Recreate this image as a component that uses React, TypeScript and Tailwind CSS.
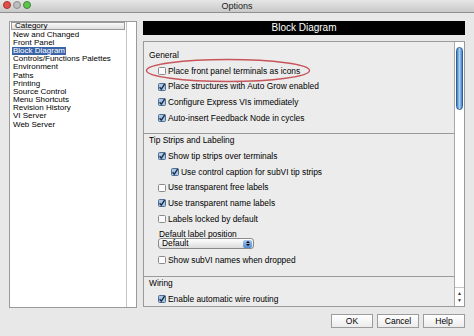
import type { ReactNode } from 'react';

const categories = [
  'New and Changed',
  'Front Panel',
  'Block Diagram',
  'Controls/Functions Palettes',
  'Environment',
  'Paths',
  'Printing',
  'Source Control',
  'Menu Shortcuts',
  'Revision History',
  'VI Server',
  'Web Server',
];

const Check = ({ on }: { on: boolean }) => (
  <svg width="8" height="8" viewBox="0 0 8 8" className="shrink-0">
    <rect x="0.5" y="0.5" width="7" height="7" rx="1" fill={on ? '#a9c6e4' : '#fafafa'} stroke={on ? '#4d6f93' : '#8a8a8a'} />
    {on && <path d="M1.6 4.2 L3.3 6.2 L6.8 0.8" fill="none" stroke="#1c2c48" strokeWidth="1.4" />}
  </svg>
);

const Row = ({ on, label, indent }: { on: boolean; label: string; indent?: boolean }) => (
  <div className={`flex items-center h-[15.8px] gap-[2px] ${indent ? 'pl-[27px]' : 'pl-[14px]'}`}>
    <Check on={on} />
    <span>{label}</span>
  </div>
);

const Section = ({ title, children, top, bottom }: { title: string; children: ReactNode; top?: string; bottom?: string }) => (
  <div className={`${bottom ?? ''} ${top ?? ''}`}>
    <div className="h-[12px] flex items-center pl-[5px]">{title}</div>
    <div className="pt-[2px]">{children}</div>
  </div>
);

const Btn = ({ label }: { label: string }) => (
  <div className="w-[42px] h-[14px] flex items-center justify-center border border-[#9c9c9c] bg-gradient-to-b from-[#ffffff] to-[#ececec] text-[8.5px]">
    {label}
  </div>
);

export default function App() {
  return (
    <div
      className="w-[474px] h-[336px] bg-[#e8e8e8] text-black text-[8px] leading-none overflow-hidden relative"
      style={{ fontFamily: '"Liberation Sans", Arial, sans-serif' }}
    >
      {/* title bar */}
      <div className="h-[13px] flex items-center bg-gradient-to-b from-[#e6e6e6] to-[#c9c9c9] border-b border-[#8f8f8f]">
        <div className="relative z-50 w-[60px] shrink-0 h-full flex items-start pt-[1px] pl-[3px] gap-[2px]">
          <span className="block shrink-0 w-[8px] h-[8px] rounded-full bg-[#e0504a] border border-[#a8312c]"></span>
          <span className="block shrink-0 w-[8px] h-[8px] rounded-full bg-[#bdbdbd] border border-[#8c8c8c]"></span>
          <span className="block shrink-0 w-[8px] h-[8px] rounded-full bg-[#5fc24f] border border-[#3a8a2f]"></span>
        </div>
        <span className="flex-1 text-[9px] text-[#222] text-center">Options</span>
        <div className="w-[60px] shrink-0" />
      </div>

      <div className="flex gap-[6px] pl-[9px] pt-[8px]">
        {/* category list */}
        <div className="w-[128px] h-[287px] bg-white border border-[#9a9a9a] flex">
          <div className="flex-1">
            <div className="h-[8px] mx-[1px] border border-[#9a9a9a] bg-gradient-to-b from-[#fafafa] to-[#dedede] flex items-center pl-[3px]">
              Category
            </div>
            <div className="pt-[0.5px]">
              {categories.map((c) => (
                <div key={c} className="h-[8.2px] flex items-center pl-[3px]">
                  <span className={c === 'Block Diagram' ? 'bg-[#3a64a8] text-white px-[1px] -ml-[1px]' : ''}>{c}</span>
                </div>
              ))}
            </div>
          </div>
          <div className="w-[10px] border-l border-[#c4c4c4] bg-white" />
        </div>

        {/* right side */}
        <div className="w-[322px] flex flex-col">
          <div className="h-[14px] bg-black text-white text-[10px] flex items-center justify-center">Block Diagram</div>
          <div className="mt-[6px] h-[266px] border border-[#9a9a9a] bg-[#ececec] flex relative text-[8.4px]">
            <div className="flex-1">
              <Section title="General" top="pt-[7px]" bottom="pb-[7px] border-b border-[#9a9a9a]">
                <Row on={false} label="Place front panel terminals as icons" />
                <Row on label="Place structures with Auto Grow enabled" />
                <Row on label="Configure Express VIs immediately" />
                <Row on label="Auto-insert Feedback Node in cycles" />
              </Section>
              <Section title="Tip Strips and Labeling" bottom="pb-[8px] border-b border-[#9a9a9a]">
                <Row on label="Show tip strips over terminals" />
                <Row on indent label="Use control caption for subVI tip strips" />
                <Row on={false} label="Use transparent free labels" />
                <Row on label="Use transparent name labels" />
                <Row on={false} label="Labels locked by default" />
                <div className="pl-[15px] pt-[3px] h-[11px]">Default label position</div>
                <div className="ml-[14px] w-[96px] h-[11px] rounded-[3px] border border-[#8a8a8a] bg-gradient-to-b from-[#ffffff] to-[#dcdcdc] flex items-center justify-between pl-[3px] pr-[1px]">
                  <span>Default</span>
                  <div className="w-[9px] h-[8px] rounded-[2px] bg-gradient-to-b from-[#a6c8ec] to-[#4f8ad0] flex flex-col items-center justify-center gap-[1px]">
                    <div className="w-0 h-0 border-l-[2px] border-r-[2px] border-b-[2px] border-l-transparent border-r-transparent border-b-black" />
                    <div className="w-0 h-0 border-l-[2px] border-r-[2px] border-t-[2px] border-l-transparent border-r-transparent border-t-black" />
                  </div>
                </div>
                <div className="pt-[3px]">
                  <Row on={false} label="Show subVI names when dropped" />
                </div>
              </Section>
              <Section title="Wiring">
                <Row on label="Enable automatic wire routing" />
              </Section>
            </div>

            {/* scrollbar */}
            <div className="w-[10px] border-l border-[#a8a8a8] bg-white flex flex-col items-center pt-[5px]">
              <div className="w-[7px] h-[63px] rounded-full bg-gradient-to-r from-[#3f7fc4] via-[#a9d2f5] to-[#3f7fc4] border border-[#2f5f96]" />
              <div className="flex-1" />
              <div className="w-full border-t border-[#c8c8c8] flex flex-col items-center gap-[2px] py-[3px] text-[5px] text-[#333]">
                <span>▲</span>
                <span>▼</span>
              </div>
            </div>

            {/* red annotation ellipse */}
            <svg className="absolute left-[1px] top-[16px]" width="170" height="26" viewBox="0 0 170 26">
              <ellipse cx="83" cy="12.5" rx="81.5" ry="11" fill="none" stroke="#c8555a" strokeWidth="1.4" />
            </svg>
          </div>
        </div>
      </div>

      {/* buttons */}
      <div className="flex justify-end gap-[4px] pr-[9px] pt-[6px]">
        <Btn label="OK" />
        <Btn label="Cancel" />
        <Btn label="Help" />
      </div>
    </div>
  );
}
